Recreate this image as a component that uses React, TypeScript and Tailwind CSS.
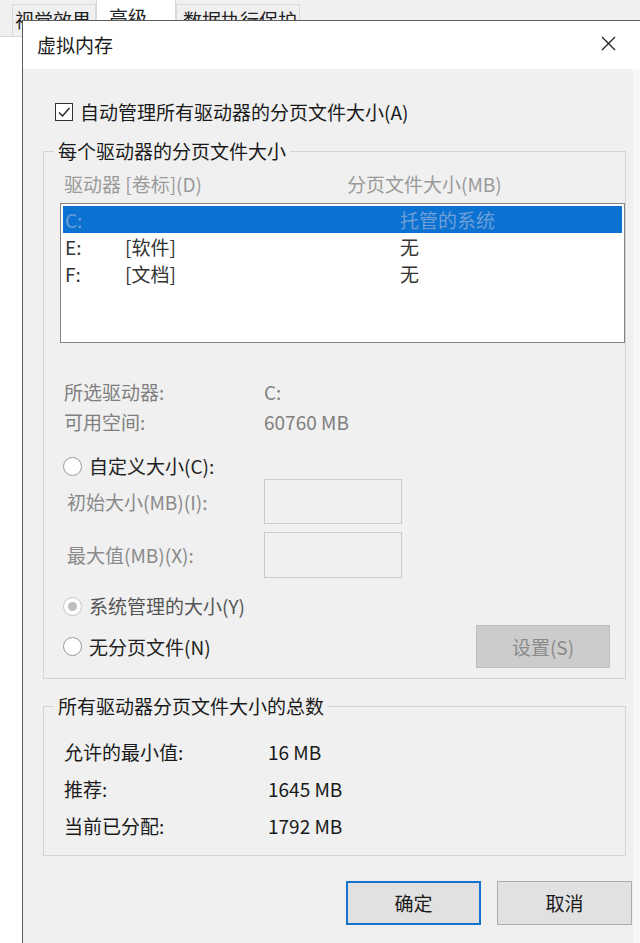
import React from "react";

const font = { fontFamily: '"Noto Sans CJK SC", "Noto Sans", sans-serif' };

const Radio: React.FC<{ checked?: boolean; disabled?: boolean }> = ({ checked, disabled }) => (
  <span
    className={`flex h-[19px] w-[19px] items-center justify-center rounded-full border bg-white ${
      disabled ? "border-[#c4c4c4]" : "border-[#9a9a9a]"
    }`}
  >
    {checked && <span className="h-[9px] w-[9px] rounded-full bg-[#bdbdbd]" />}
  </span>
);

const rows = [
  { drive: "C:", label: "", size: "托管的系统", selected: true },
  { drive: "E:", label: "[软件]", size: "无" },
  { drive: "F:", label: "[文档]", size: "无" },
];

const totals = [
  { k: "允许的最小值:", v: "16 MB" },
  { k: "推荐:", v: "1645 MB" },
  { k: "当前已分配:", v: "1792 MB" },
];

export default function App() {
  return (
    <div className="relative h-[943px] w-[640px] overflow-hidden bg-white text-[19px] leading-[26px]" style={font}>
      {/* property sheet behind the dialog */}
      <div className="flex h-[37px] items-end border-b border-[#d9d9d9] bg-[#f0f0f0] pl-[12px]">
        <div className="h-[32px] w-[84px] border border-b-0 border-[#d9d9d9] pl-[2px] pt-[2px] text-[#222]">视觉效果</div>
        <div className="h-[37px] w-[80px] border border-b-0 border-[#d9d9d9] bg-white pl-[12px] pt-[4px] text-[#222]">高级</div>
        <div className="h-[32px] w-[124px] border border-b-0 border-[#d9d9d9] pl-[6px] pt-[2px] text-[#222]">数据执行保护</div>
      </div>

      {/* dialog */}
      <div className="absolute left-[22px] right-0 top-[20px] bottom-0 flex flex-col border-l border-t border-[#5c5c5c]">
        <div className="flex h-[48px] items-center justify-between bg-white pl-[14px] pr-[24px]">
          <span className="text-[#1a1a1a]">虚拟内存</span>
          <svg width="15" height="15" viewBox="0 0 15 15" className="mt-[-4px]">
            <path d="M1 1L14 14M14 1L1 14" stroke="#222" strokeWidth="1.3" />
          </svg>
        </div>

        <div className="flex flex-1">
          <div className="flex flex-1 flex-col bg-[#f0f0f0] pl-[20px] pt-[30px]">
            <label className="ml-[12px] flex items-center gap-[7px] text-[#1a1a1a]">
              <span className="flex h-[18px] w-[18px] items-center justify-center border border-[#333] bg-white">
                <svg width="14" height="14" viewBox="0 0 14 14">
                  <path d="M2 7.5L5.5 11L12.5 3" fill="none" stroke="#222" strokeWidth="1.4" />
                </svg>
              </span>
              自动管理所有驱动器的分页文件大小(A)
            </label>

            <fieldset className="mt-[13px] w-[583px] border border-[#d5d5d5] pb-[10px] pl-[16px]">
              <legend className="-ml-[6px] px-[4px] text-[#1a1a1a]">每个驱动器的分页文件大小</legend>
              <div className="mt-[7px] flex text-[#9a9a9a]">
                <span className="w-[287px] pl-[4px]">驱动器 [卷标](D)</span>
                <span>分页文件大小(MB)</span>
              </div>
              <div className="mt-[6px] h-[140px] border border-[#838383] bg-white py-[2px] pr-[2px] pl-[2px]">
                {rows.map((r) => (
                  <div
                    key={r.drive}
                    className={`flex h-[27px] items-center ${r.selected ? "bg-[#0b72d2] text-[#6f9fd8]" : "text-[#333]"}`}
                  >
                    <span className="w-[62px] pl-[2px]">{r.drive}</span>
                    <span className="w-[275px]">{r.label}</span>
                    <span>{r.size}</span>
                  </div>
                ))}
              </div>

              <div className="mt-[36px] flex flex-col gap-[4px] text-[#7f7f7f]">
                <div className="flex">
                  <span className="w-[204px] pl-[4px]">所选驱动器:</span>
                  <span>C:</span>
                </div>
                <div className="flex">
                  <span className="w-[204px] pl-[4px]">可用空间:</span>
                  <span>60760 MB</span>
                </div>
              </div>

              <label className="mt-[18px] flex items-center gap-[7px] pl-[3px] text-[#222]">
                <Radio />
                自定义大小(C):
              </label>
              <div className="flex items-center text-[#8a8a8a]">
                <span className="w-[204px] pl-[7px]">初始大小(MB)(I):</span>
                <span className="h-[45px] w-[138px] border border-[#cbcbcb] bg-[#f0f0f0]" />
              </div>
              <div className="mt-[8px] flex items-center text-[#8a8a8a]">
                <span className="w-[204px] pl-[7px]">最大值(MB)(X):</span>
                <span className="h-[46px] w-[138px] border border-[#cbcbcb] bg-[#f0f0f0]" />
              </div>

              <label className="mt-[15px] flex items-center gap-[7px] pl-[3px] text-[#555]">
                <Radio checked disabled />
                系统管理的大小(Y)
              </label>
              <div className="mt-[6px] flex items-center justify-between pr-[15px]">
                <label className="flex items-center gap-[7px] pl-[3px] text-[#222]">
                  <Radio />
                  无分页文件(N)
                </label>
                <span className="flex h-[43px] w-[134px] items-center justify-center border border-[#bdbdbd] bg-[#cccccc] text-[#8a8a8a]">
                  设置(S)
                </span>
              </div>
            </fieldset>

            <fieldset className="mt-[14px] w-[583px] border border-[#d5d5d5] pb-[16px] pl-[16px]">
              <legend className="-ml-[6px] px-[4px] text-[#1a1a1a]">所有驱动器分页文件大小的总数</legend>
              <div className="mt-[20px] flex flex-col gap-[11px] text-[#1a1a1a]">
                {totals.map((t) => (
                  <div key={t.k} className="flex">
                    <span className="w-[208px] pl-[4px]">{t.k}</span>
                    <span>{t.v}</span>
                  </div>
                ))}
              </div>
            </fieldset>

            <div className="mt-[25px] flex justify-end gap-[16px] pr-[1px]">
              <span className="flex h-[44px] w-[135px] items-center justify-center border-2 border-[#1473d0] bg-[#e1e1e1] text-[#1a1a1a]">
                确定
              </span>
              <span className="flex h-[44px] w-[135px] items-center justify-center border border-[#adadad] bg-[#e1e1e1] text-[#1a1a1a]">
                取消
              </span>
            </div>
          </div>
          <div className="w-[7px] bg-[#f7f7f7]" />
        </div>
      </div>
    </div>
  );
}
